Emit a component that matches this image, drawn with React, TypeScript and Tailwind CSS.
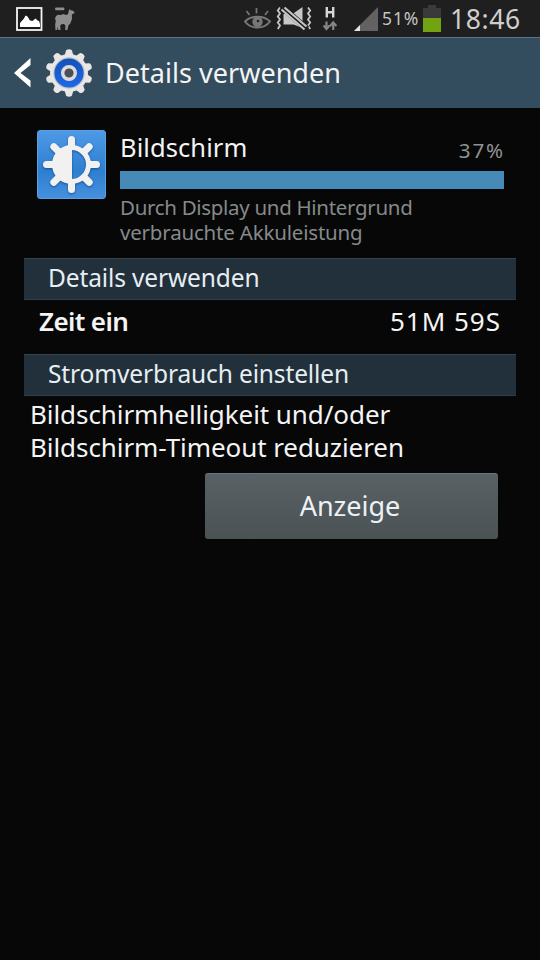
import React from "react";

const EIGHT = [0, 45, 90, 135, 180, 225, 270, 315];
const TEN = [0, 36, 72, 108, 144, 180, 216, 252, 288, 324];

function PictureIcon() {
  return (
    <svg className="ml-4 h-6 w-[27px]" viewBox="0 0 27 24">
      <rect x="1" y="1" width="24.500" height="22" fill="#1b1b1b" stroke="#f4f4f4" strokeWidth="1.800" />
      <path d="M4 20v-4l4-4.500 1.500-3 2 1 2.500 4 2.500.5 3-2.500 2 2 1.500.5 1 3v3z" fill="#fff" />
    </svg>
  );
}

function LlamaIcon() {
  return (
    <svg className="ml-[11px] h-6 w-[22px]" viewBox="0 0 22 24" fill="#8d8d8d">
      <rect x="1" y="0.500" width="9.500" height="2.800" rx="1.400" />
      <path d="M14.500 5l.8-3 1.200 1.200 2 .3 2 1.500-.4 1.500-2.200.7v5l-1.500 4-2 2.300-1 4.500h-2.200l.2-4.500-1.400-1.500-2.500.2-1.200 1.300.2 4.500H4.300l-.6-3.500-.5 3.500H1.400L1.200 17.500l.6-3.500-.8-2.500 1-2.500L4 7.700l2.800.3L9.500 7l2.500 1 2-.8z" />
    </svg>
  );
}

function EyeIcon() {
  return (
    <svg className="h-6 w-[27px]" viewBox="0 0 27 24" fill="none" stroke="#777" strokeWidth="2">
      <path d="M1 14.500C7 8 20 8 26 14.500 20 22.500 7 22.500 1 14.500z" />
      <circle cx="13.500" cy="14.800" r="4.200" fill="#777" />
      <circle cx="14" cy="14" r="1.300" fill="#222" stroke="none" />
      <path d="M12.500 1v5.500M2.500 4L5.500 8M24 4L21 8" strokeWidth="1.700" />
    </svg>
  );
}

function MuteVibrateIcon() {
  return (
    <svg className="ml-[5px] h-6 w-9" viewBox="0 0 36 24">
      <path d="M4 .5L1.800 3.500 4 6.500 1.800 9.500 4 12.500 1.800 15.500 4 18.500 1.800 22M32 .5l2.200 3L32 6.500l2.200 3-2.200 3 2.200 3-2.200 3 2.200 3.500" fill="none" stroke="#c6c6c6" strokeWidth="1.800" />
      <path d="M7.500 7h9L26.500 0v21l-9-3.500h-10z" fill="#c6c6c6" />
      <path d="M6 0L31 22" stroke="#1f1f1f" strokeWidth="6.200" />
      <path d="M8.500 .5L30.500 19.500M5.500 2.500L28.500 22.500" stroke="#c6c6c6" strokeWidth="2.100" />
    </svg>
  );
}

function DataIcon() {
  return (
    <svg className="ml-[11px] h-6 w-[14px]" viewBox="0 0 14 24">
      <path d="M3.800 0v10.500M10.200 0v10.500M4 5.200h6" stroke="#d8d8d8" strokeWidth="2.400" fill="none" />
      <path d="M3.500 14.500v7M.5 18.500L3.500 22 6.500 18.500M10.200 23v-7M7 19l3.200-3.500 3.200 3.500" stroke="#858585" strokeWidth="2.200" fill="none" />
    </svg>
  );
}

function SignalIcon() {
  return (
    <svg className="ml-[17px] h-6 w-6" viewBox="0 0 24 24">
      <path d="M24 0v24H0z" fill="#626262" />
      <path d="M6 18v6H0z" fill="#e4e4e4" />
    </svg>
  );
}

function Battery() {
  return (
    <div className="ml-px flex h-7 w-[18px] flex-col items-center">
      <div className="h-[3px] w-2 bg-[#3a3a3a]" />
      <div className="h-[10px] w-full bg-[#3a3a3a]" />
      <div className="h-[14px] w-full bg-[#72a313]" />
    </div>
  );
}

function SettingsGear() {
  return (
    <svg className="ml-[13px] h-12 w-12" viewBox="-24 -24 48 48">
      <defs>
        <linearGradient id="ring" x1="0" y1="0" x2="0" y2="1">
          <stop offset="0" stopColor="#1450b8" />
          <stop offset="1" stopColor="#1f6ae6" />
        </linearGradient>
      </defs>
      <g fill="#e9e7e5">
        {TEN.map((a) => (
          <path key={a} d="M-4.500-17L-2.900-22.700Q0-24.700 2.900-22.700L4.500-17z" transform={`rotate(${a})`} />
        ))}
        <circle r="19" />
      </g>
      <circle r="15.700" fill="#b9c1cf" />
      <circle r="14.600" fill="url(#ring)" />
      <circle r="6.300" fill="#4b5057" stroke="#dcdcdc" strokeWidth="3.400" />
    </svg>
  );
}

function BrightnessIcon() {
  return (
    <div className="h-[69px] w-[69px] shrink-0 rounded-[3px] border border-[#5a9fe0] bg-linear-to-b from-[#4d99e6] via-[#2e7fd0] via-60% to-[#4590de]">
      <svg className="h-full w-full drop-shadow-[0_1px_1px_rgba(0,30,80,0.5)]" viewBox="-33.500 -33.500 67 67">
        <g stroke="#f1f1f1" strokeWidth="7" strokeLinecap="round">
          {EIGHT.map((a) => (
            <path key={a} d="M0-18V-25" transform={`rotate(${a})`} />
          ))}
        </g>
        <circle r="17" fill="none" stroke="#f1f1f1" strokeWidth="5" />
        <path d="M.5-18A18 18 0 0 0 .5 18z" fill="#f1f1f1" />
      </svg>
    </div>
  );
}

function SectionHeader({ children }: { children: React.ReactNode }) {
  return (
    <div className="mx-6 flex h-[42px] items-center border-t border-b border-t-[#34444e] border-b-[#2b3f4c] bg-[#21303a] pb-px pl-[24px] text-[24.500px] tracking-[-0.13px] whitespace-nowrap text-[#e6eef3]">
      {children}
    </div>
  );
}

export default function App() {
  return (
    <div className="flex h-[960px] w-[540px] flex-col overflow-hidden bg-[#070707] font-['Noto_Sans',sans-serif] text-[#f4f4f4]">
      <header className="flex h-[37px] shrink-0 items-center bg-[#1f1f1f] whitespace-nowrap">
        <PictureIcon />
        <LlamaIcon />
        <div className="ml-[168px] flex items-center">
          <EyeIcon />
          <MuteVibrateIcon />
          <DataIcon />
          <SignalIcon />
        </div>
        <span className="ml-1 w-[40px] pb-px text-[17.500px] leading-6 tracking-[0.9px] text-[#c4c4c4]">51%</span>
        <Battery />
        <span className="ml-[9px] pt-px text-[26.500px] leading-9 tracking-[0.6px] text-[#cfcfcf]">18:46</span>
      </header>

      <nav className="flex h-[71px] shrink-0 items-center border-t border-t-[#5b7484] bg-[#334d5f]">
        <svg className="ml-[14px] h-[30px] w-[18px]" viewBox="0 0 18 30">
          <path d="M16.500 0v7L6.500 15l10 7.500v7L0 15z" fill="#fff" />
        </svg>
        <SettingsGear />
        <h1 className="ml-3 text-[27px] leading-9 tracking-[0.03px] whitespace-nowrap">Details verwenden</h1>
      </nav>

      <main className="flex flex-col whitespace-nowrap">
        <section className="flex h-[150px] pt-[22px] pl-[37px]">
          <BrightnessIcon />
          <div className="ml-[14px] flex w-[384px] flex-col">
            <div className="flex h-[41px] items-center justify-between">
              <span className="pb-[6px] text-[25.500px] tracking-[0.08px]">Bildschirm</span>
              <span className="-mr-px text-[20.500px] tracking-[1.900px] text-[#8f9393]">37%</span>
            </div>
            <div className="h-[18px] bg-[#468bb7]" />
            <p className="mt-[6px] text-[20.500px] leading-[25px] text-[#858a8b]">
              <span className="block tracking-[-0.310px]">Durch Display und Hintergrund</span>
              <span className="block tracking-[-0.190px]">verbrauchte Akkuleistung</span>
            </p>
          </div>
        </section>

        <SectionHeader>Details verwenden</SectionHeader>
        <div className="flex h-[54px] items-start justify-between pt-[3px] pr-[39px] pl-[39px] text-[26px] leading-9">
          <span className="font-semibold tracking-[-0.600px]">Zeit ein</span>
          <span className="tracking-[1px]">51M 59S</span>
        </div>
        <SectionHeader>Stromverbrauch einstellen</SectionHeader>
        <p className="mt-[2px] pl-[30px] text-[26px] leading-[33px] tracking-[-0.070px]">
          <span className="block">Bildschirmhelligkeit und/oder</span>
          <span className="block">Bildschirm-Timeout reduzieren</span>
        </p>
        <button className="mt-[9px] ml-[205px] flex h-[66px] w-[293px] items-center justify-center rounded-[3px] border-t border-t-[#6a7377] bg-linear-to-b from-[#596166] to-[#4b5254] text-[27px] text-[#ecf1f3]">
          <span className="mr-[3px]">Anzeige</span>
        </button>
      </main>
    </div>
  );
}
